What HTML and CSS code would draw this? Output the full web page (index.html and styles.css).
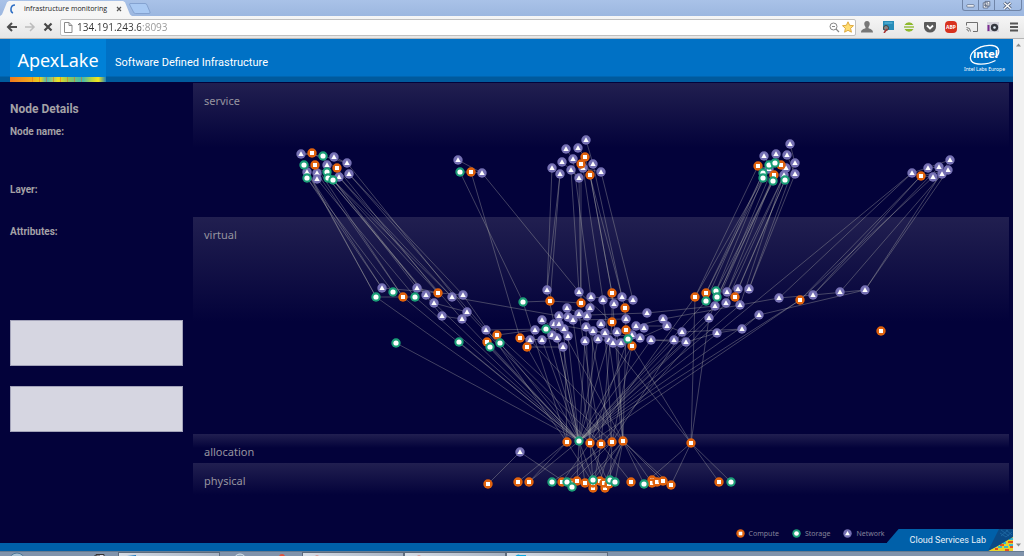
FILE: index.html
```html
<!DOCTYPE html>
<html lang="en">
	<head>
		<meta charset="utf-8" />
		<title>infrastructure monitoring</title>
		<link rel="stylesheet" href="styles.css">
	</head>
	<body>
		<div class="tabstrip">
			<div class="tab">
				<svg class="spinner" viewBox="0 0 10 10"><path d="M6 1C1 1 1 8 4 9" fill="none" stroke="#2f6fc4" stroke-width="1.5"/></svg>
				<span class="tab-title">infrastructure monitoring</span>
				<button class="tab-close" aria-label="Close tab"><svg viewBox="0 0 6 6"><path d="M1 1l4 4M5 1L1 5" stroke="#555" stroke-width="1.2"/></svg></button>
			</div>
			<button class="new-tab" aria-label="New tab"><svg viewBox="0 0 22 11"><path d="M1 .5h15q1.500 0 2 1.500l3 7q.5 1.500-1 1.500H6.500q-1.500 0-2-1.500L.8 2Q.3.5 1 .5z" fill="#a9c9f3" stroke="#7c9bc9" stroke-width=".8"/></svg></button>
			<div class="win-buttons">
				<button aria-label="Minimize"><svg viewBox="0 0 16 10"><rect x="4" y="5" width="8" height="2.500" rx="1" fill="#fff" stroke="#57657f" stroke-width=".8"/></svg></button>
				<button aria-label="Restore"><svg viewBox="0 0 16 10"><path d="M6.500 1.500h5v5h-5zM4.500 3h5v5.500h-5zM6.300 5h1.500v1.500H6.300z" fill="#fff" stroke="#57657f" stroke-width=".9"/></svg></button>
				<button class="win-close" aria-label="Close"><svg viewBox="0 0 24 10"><path d="M8.500 2.500l6 5.500M14.500 2.500l-6 5.500" stroke="#57657f" stroke-width="2.800"/><path d="M8.500 2.500l6 5.500M14.500 2.500l-6 5.500" stroke="#fff" stroke-width="1.200"/></svg></button>
			</div>
		</div>

		<div class="toolbar">
			<button aria-label="Back"><svg viewBox="0 0 12 12"><path d="M11 6H2M6 2L2 6l4 4" fill="none" stroke="#4d4d4d" stroke-width="2"/></svg></button>
			<button aria-label="Forward"><svg viewBox="0 0 12 12"><path d="M1 6h8.500M6 2l4 4-4 4" fill="none" stroke="#bdbdbd" stroke-width="1.500"/></svg></button>
			<button aria-label="Stop"><svg viewBox="0 0 12 12"><path d="M2.500 2.500l7 7M9.500 2.500l-7 7" stroke="#484848" stroke-width="2.200"/></svg></button>
			<div class="omnibox">
				<svg viewBox="0 0 12 12"><path d="M2.500 1.500h4.500l3 3v7H2.500zM7 1.500v3h3" fill="#fff" stroke="#8b8b8b"/></svg>
				<input class="url" type="text" aria-label="Address" value="134.191.243.6:8093">
				<svg viewBox="0 0 12 12"><circle cx="5.500" cy="5.500" r="3.500" fill="none" stroke="#888"/><path d="M8 8l3 3M4 5.500h3" stroke="#888" stroke-width="1.200"/></svg>
				<svg viewBox="0 0 12 12"><path d="M6 .8l1.600 3.500 3.900.4-2.900 2.600.8 3.900L6 9.300l-3.400 1.900.8-3.900L.5 4.700l3.900-.4z" fill="#ffdd72" stroke="#dba435" stroke-width=".9"/></svg>
			</div>
			<button aria-label="Profile"><svg viewBox="0 0 12 12"><path d="M6 0c2 0 3 1.400 2.700 3.200C8.500 4.700 8 5 7.500 6v1.300c1.500.8 4.500 1 4.500 4.200H0c0-3.200 3-3.400 4.500-4.200V6C4 5 3.500 4.700 3.300 3.200 3 1.400 4 0 6 0z" fill="#777"/></svg></button>
			<button aria-label="Inspector"><svg viewBox="0 0 12 12"><path d="M1 0h11v9H1z" fill="#278db9"/><path d="M2.500 2h8" stroke="#6ec0df"/><circle cx="4" cy="7" r="2.500" fill="#888" stroke="#444"/><path d="M2 12l3-4" stroke="#a33" stroke-width="1.500"/></svg></button>
			<button aria-label="Tunnel"><svg viewBox="0 0 12 12"><path d="M1.500 4a5 5 0 0 1 9 0zM1.500 8a5 5 0 0 0 9 0z" fill="#8fb92e"/><path d="M1 6h10" stroke="#98be45" stroke-width="1.500"/></svg></button>
			<button aria-label="Pocket"><svg viewBox="0 0 12 12"><path d="M1 1h10q1 0 1 1v4a6 5.500 0 0 1-12 0V2q0-1 1-1z" fill="#5a5a5a"/><path d="M3 4.500l3 3 3-3" fill="none" stroke="#fff" stroke-width="1.800"/></svg></button>
			<button class="abp" aria-label="Ad blocker">ABP</button>
			<button aria-label="Cast"><svg viewBox="0 0 12 12"><path d="M.5 4.500v-3h11v9H7M.5 6.500q4 0 4 4M.5 8.500q2 0 2 2" fill="none" stroke="#707070"/></svg></button>
			<button aria-label="Camera"><svg viewBox="0 0 12 12"><path d="M0 1h12v10H0z" fill="#d5d4dc"/><path d="M1.500 4v6" stroke="#7a2b91" stroke-width="2"/><circle cx="7.500" cy="6.500" r="3.700" fill="#353840"/><circle cx="7.500" cy="6.500" r="1.300" fill="#e3edf5"/></svg></button>
			<button aria-label="Menu"><svg viewBox="0 0 12 12"><path d="M2 2.500h8M2 6h8M2 9.500h8" stroke="#555" stroke-width="1.800"/></svg></button>
		</div>

		<div class="viewport">
			<div class="page">
				<header class="banner">
					<div class="brand"><span>ApexLake</span></div>
					<div class="subtitle">Software Defined Infrastructure</div>
					<div class="intel">
						<svg viewBox="0 0 32 21" role="img" aria-label="intel">
							<path d="M11 3.200C19 .2 29.500.3 29.800 7.200c.1 3-2 5-3.800 5.800M29 5C27-.5 14 .5 7 5.500-1 11-.5 19 9 20c6 .5 13-1 17.500-3.500" fill="none" stroke="#fff" stroke-width="1.300"/>
							<text x="4" y="14">intel</text>
						</svg>
						<span>Intel Labs Europe</span>
					</div>
				</header>

				<main class="content">
					<aside class="details">
						<h2>Node Details</h2>
						<h3 class="node-name">Node name:</h3>
						<h3 class="node-layer">Layer:</h3>
						<h3 class="node-attrs">Attributes:</h3>
						<textarea aria-label="Node attributes" readonly></textarea>
						<textarea aria-label="Node metrics" readonly></textarea>
					</aside>
					<section class="stage">
						<div class="layer">service</div>
						<div class="layer">virtual</div>
						<div class="layer">allocation</div>
						<div class="layer">physical</div>
						<svg id="graph" viewBox="193 83 816 446" preserveAspectRatio="xMinYMin meet"></svg>
					</section>
				</main>

				<footer class="footer">
					<ul class="legend">
						<li><svg viewBox="-5 -5 10 10"><circle r="4.700" fill="#e0620d"/><path d="M-2-2h4v4h-4z" fill="#fff"/></svg>Compute</li>
						<li><svg viewBox="-5 -5 10 10"><circle r="4.700" fill="#1b9e77"/><circle r="2.600" fill="#fff"/></svg>Storage</li>
						<li><svg viewBox="-5 -5 10 10"><circle r="4.700" fill="#7570b3"/><path d="M0-2.700L2.700 2h-5.400z" fill="#fff"/></svg>Network</li>
					</ul>
					<div class="lab">Cloud Services Lab
						<svg viewBox="0 0 25 22">
							<path d="M0 22L25 7v15z" fill="#e8d22b"/>
							<path d="M7 20h3M12 16h4M17 21h4M20 13h5M22 18h3" stroke="#e4521d" stroke-width="2"/>
							<path d="M10 18h4M16 18h4M21 10h4M21 16h4M15 14h3" stroke="#38b9c9" stroke-width="2"/>
							<path d="M0 22L11 0h14v8L8 18z" fill="#0a4a86"/>
							<path d="M13 1l8 6M18 1l6 5M12 4l6 4M20 1l-7 6M24 3l-6 5" stroke="#2470aa" stroke-width=".7"/>
						</svg>
					</div>
				</footer>
			</div>
			<div class="scrollbar">
				<svg viewBox="0 0 11 8"><path d="M3 5.500h5L5.500 2.500z" fill="#8b8b8b"/></svg>
				<svg viewBox="0 0 11 8"><path d="M3 2.500h5L5.500 5.500z" fill="#8b8b8b"/></svg>
			</div>
		</div>

		<div class="taskbar">
			<div class="pins">
				<svg viewBox="0 0 20 5"><circle cx="10" cy="9" r="8" fill="#a9c2d4" stroke="#4b7696"/></svg>
				<svg viewBox="0 0 20 5"><path d="M5 4h10v1H5z" fill="#c5ae8d"/></svg>
				<svg viewBox="0 0 20 5"><path d="M7 6V2.500h8V6M5 6V4h6" fill="#dde" stroke="#333"/></svg>
			</div>
			<div class="task"><svg viewBox="0 0 20 5"><path d="M5 5l3-2 9-1v3z" fill="#1677c0"/></svg></div>
			<div class="pins pins-mid">
				<svg viewBox="0 0 20 5"><circle cx="10" cy="8" r="6" fill="#93a8ba" stroke="#d8e5ee"/></svg>
				<svg viewBox="0 0 20 5"><circle cx="10" cy="5" r="3" fill="#e0523c"/></svg>
			</div>
			<div class="task"><svg viewBox="0 0 20 5"><path d="M9 5q5-5 10 0z" fill="#d55345"/></svg></div>
			<div class="task"><svg viewBox="0 0 20 5"><path d="M9 5q5-5 10 0z" fill="#d55345"/></svg></div>
			<div class="task"><svg viewBox="0 0 20 5"><path d="M7 5q3-5 6-3h6v3z" fill="#0aa6df"/></svg></div>
		</div>
		<script type="text/javascript" src="graph.js"></script>
	</body>
</html>
```
FILE: styles.css
```css
*{
	box-sizing: border-box;
}
body{
	margin: 0;
	min-height: 100vh;
	display: flex;
	flex-direction: column;
	font-family: "Noto Sans", "Open Sans", sans-serif;
	background: #03023a;
}
button{
	padding: 0;
	border: 0;
	background: none;
}
svg{
	display: block;
}

/* browser window */
.tabstrip{
	display: flex;
	align-items: flex-end;
	height: 16px;
	background: linear-gradient(#a9c2e8, #9cb7e0);
}
.tab{
	display: flex;
	align-items: center;
	width: 132px;
	height: 15px;
	padding: 0 10px 0 9px;
	background: #f6f6f6;
	clip-path: polygon(0 100%, 2px 90%, 7px 8%, 9px 0, 123px 0, 125px 8%, 130px 90%, 132px 100%);
}
.spinner{
	width: 10px;
	height: 10px;
	margin-right: 5px;
}
.tab-title{
	flex: 1;
	font: 7px/14px "Open Sans", sans-serif;
	color: #222;
	white-space: nowrap;
}
.tab-close{
	width: 6px;
}
.new-tab{
	width: 22px;
	height: 11px;
	margin: 0 0 2px -3px;
}
.win-buttons{
	display: flex;
	align-self: flex-start;
	height: 11px;
	margin-left: auto;
	margin-right: 2px;
	border: 1px solid #7085a8;
	border-top: 0;
	border-radius: 0 0 3px 3px;
}
.win-buttons button{
	width: 16px;
	border-right: 1px solid #7085a8;
}
.win-buttons .win-close{
	width: 26px;
	border-right: 0;
}
.toolbar{
	display: flex;
	align-items: center;
	gap: 9px;
	height: 23px;
	padding: 0 4px 0 6px;
	background: linear-gradient(#f6f6f6, #e6e6e6);
	border-bottom: 1px solid #b5b5b5;
}
.toolbar > button{
	flex: none;
	width: 12px;
	height: 12px;
}
.toolbar button:nth-child(-n+3){
	margin-right: -3px;
}
.omnibox{
	flex: 1;
	display: flex;
	align-items: center;
	gap: 2px;
	height: 17px;
	margin-right: -4px;
	padding: 0 1px;
	border: 1px solid #c0c0c0;
	border-radius: 2px;
	background: #fff;
}
.omnibox svg{
	width: 12px;
	height: 12px;
}
.url{
	flex: 1;
	min-width: 0;
	border: 0;
	padding: 0 0 0 1px;
	font: 10px/14px "Open Sans", sans-serif;
	/* host is dark, port is dimmed */
	color: transparent;
	background: linear-gradient(90deg, #333 65px, #959595 65px);
	-webkit-background-clip: text;
	background-clip: text;
}
.toolbar .abp{
	border-radius: 4px;
	background: #d8321f;
	color: #fff;
	font: bold 5px/12px "Open Sans", sans-serif;
}

/* page */
.viewport{
	flex: 1;
	display: flex;
}
.page{
	flex: 1;
	display: flex;
	flex-direction: column;
	min-width: 0;
}
.scrollbar{
	display: flex;
	flex-direction: column;
	justify-content: space-between;
	width: 11px;
	padding: 2px 0;
	background: #f1f1f1;
}
.scrollbar svg{
	width: 11px;
	height: 8px;
}
.banner{
	display: flex;
	height: 43px;
	padding: 0 8px 0 10px;
	color: #fff;
	background: linear-gradient(#0071c5 37px, #005a9d 38px);
}
.brand{
	width: 96px;
	padding-bottom: 5px;
	text-align: center;
	font-size: 18px;
	line-height: 42px;
	background:
		repeating-linear-gradient(90deg, transparent 0 3px, rgba(240,100,20,.5) 3px 4px, transparent 4px 7px) bottom / 60% 5px no-repeat,
		linear-gradient(90deg, #ef7a1e, #f3a51d 20%, #e8d120 32%, #45b8bd 38%, #f2e020 50%, #8fc75c 62%, #3db9b5 75%, #b9d53e 85%, #f5e61c 92%, #1c80bd) bottom / 100% 5px no-repeat,
		#0081d7;
}
.brand span{
	display: block;
	height: 38px;
}
.subtitle{
	padding-left: 9px;
	font: 11px/47px Roboto, sans-serif;
}
.intel{
	display: flex;
	flex-direction: column;
	align-items: center;
	margin-left: auto;
	padding-top: 5px;
	font-size: 5px;
	line-height: 9px;
}
.intel svg{
	width: 32px;
	height: 21px;
}
.intel text{
	font: bold 11px "Open Sans", sans-serif;
	fill: #fff;
}
.content{
	flex: 1;
	display: flex;
	padding: 1px 4px 0 0;
}
.details{
	width: 193px;
	padding: 18px 10px 0;
	color: #a3a1a6;
	font-family: Roboto, sans-serif;
}
.details h2{
	margin: 0;
	font-size: 12px;
	line-height: 16px;
}
.details h3{
	margin: 0;
	font-size: 10px;
	line-height: 14px;
}
.details .node-name{
	margin-top: 8px;
}
.details .node-layer{
	margin-top: 44px;
}
.details .node-attrs{
	margin-top: 28px;
}
.details textarea{
	display: block;
	width: 100%;
	height: 46px;
	margin-bottom: 20px;
	border: 1px solid #a3a3b9;
	background: #d6d6e1;
	resize: none;
}
.node-attrs + textarea{
	margin-top: 81px;
}
.stage{
	flex: 1;
	position: relative;
	display: grid;
	grid-template-rows: 134fr 217fr 29fr 66fr;
	min-width: 0;
}
.layer{
	padding: 10px 11px 0;
	font-size: 11px;
	line-height: 16px;
	color: #96949f;
	background: linear-gradient(#211f50, #03023a 48%);
}
#graph{
	position: absolute;
	inset: 0;
	width: 100%;
	height: 100%;
}
.footer{
	display: flex;
	justify-content: flex-end;
	height: 22px;
	background: linear-gradient(transparent 14px, #0060a9 14px);
}
.legend{
	display: flex;
	gap: 13px;
	height: 9px;
	margin: 0 2px 0 0;
	padding: 0;
	list-style: none;
	font-size: 7px;
	line-height: 9px;
	color: #85839a;
}
.legend li{
	display: flex;
	gap: 4px;
}
.legend svg{
	width: 9px;
	height: 9px;
}
.lab{
	display: flex;
	padding-left: 23px;
	color: #e8f1f8;
	font: 9px/22px Roboto, sans-serif;
	background: #0060a9;
	clip-path: polygon(0 14px, 12px 0, 100% 0, 100% 100%, 0 100%);
}
.lab svg{
	width: 25px;
	height: 22px;
	margin-left: 2px;
}

/* desktop taskbar */
.taskbar{
	display: flex;
	height: 5px;
	background: #8093ab;
	border-top: 1px solid #667b91;
	overflow: hidden;
}
.pins{
	display: flex;
	justify-content: space-between;
	width: 118px;
	padding: 0 9px 0 7px;
}
.pins-mid{
	width: 82px;
	padding: 0 10px;
}
.taskbar svg{
	width: 20px;
	height: 5px;
}
.task{
	width: 102px;
	border: 1px solid #5d6b7c;
	border-bottom: 0;
	background: linear-gradient(90deg, #d5dce5, #a4b1c2);
}
```
FILE: graph.js
```js
var NS = "http://www.w3.org/2000/svg";
var graph = document.getElementById("graph");

// c = compute, s = storage, n = network
var nodes = {
	n: "301,154 334,157 347,163 327,165 307,172 317,173 349,174 317,179 339,177 458,160 482,173 " +
		"586,140 578,148 566,149 573,159 562,162 593,164 552,168 583,168 571,170 560,174 601,172 579,178 " +
		"790,144 776,154 764,156 787,155 795,163 786,168 769,169 784,175 795,174 " +
		"912,173 933,177 928,168 939,167 950,160 948,170 942,174 " +
		"382,288 417,288 426,295 434,303 452,297 463,295 442,316 467,312 462,319 486,330 " +
		"547,290 579,292 591,297 603,300 622,297 614,304 633,300 567,308 590,308 559,316 542,320 568,317 573,320 " +
		"579,314 587,316 647,313 626,319 601,324 554,324 559,324 535,330 564,329 586,327 593,331 605,333 617,332 " +
		"636,326 644,328 632,335 640,338 530,340 542,340 552,335 557,338 568,336 563,347 585,341 598,339 609,340 613,343 621,343 " +
		"727,292 738,289 749,289 715,306 726,303 740,305 709,318 663,319 667,326 651,340 682,332 674,340 686,342 " +
		"717,333 742,329 759,315 779,298 813,295 840,292 865,290 520,452",
	c: "312,153 315,165 337,168 471,172 585,157 581,164 590,175 758,166 781,165 774,175 921,176 " +
		"403,297 438,293 497,335 487,342 550,301 581,303 612,293 625,308 612,322 626,330 520,338 527,347 632,346 " +
		"695,297 706,293 735,297 800,300 881,331 567,442 590,443 601,444 612,442 623,441 691,443 " +
		"488,484 518,482 529,482 562,482 571,483 577,481 585,483 593,488 593,483 600,481 605,488 604,483 609,484 " +
		"631,482 652,480 652,483 657,482 663,481 671,485 719,482",
	s: "323,156 304,165 327,172 307,178 328,178 333,180 460,172 769,165 775,163 763,173 763,178 773,181 785,180 " +
		"393,292 376,297 415,297 500,343 490,347 396,343 459,342 523,302 546,329 628,339 716,291 717,297 706,301 " +
		"579,441 552,482 567,482 572,487 593,480 610,480 615,482 644,484 731,482"
};

// every start point is joined to each of the ends behind it
var links = [
	// service clusters
	"301,154 312,153 323,156", "312,153 337,168", "323,156 347,163", "334,157 347,163", "304,165 327,172", "458,160 482,173", "460,172 471,172", "471,172 482,173",
	"586,140 593,164", "578,148 585,157", "566,149 573,159", "562,162 571,170", "552,168 560,174", "583,168 601,172", "571,170 579,178",
	"790,144 795,163", "776,154 781,165", "764,156 769,165", "787,155 795,174", "758,166 769,169",
	"912,173 950,160 921,176", "921,176 933,177 948,170", "928,168 939,167",
	// service to virtual
	"304,165 376,297", "307,172 376,297 382,288", "307,178 382,288 393,292", "317,173 403,297", "315,165 403,297", "317,179 415,297",
	"327,172 417,288 442,316", "328,178 426,295 434,303", "333,180 438,293 452,297", "339,177 452,297 462,319", "337,168 438,293", "349,174 463,295 486,330", "347,163 467,312",
	"460,172 523,302", "471,172 520,338", "482,173 579,292",
	"552,168 547,290", "560,174 550,301 547,290", "571,170 579,292", "573,159 591,297", "579,178 581,303", "581,164 581,303", "583,168 603,300", "590,175 612,293", "590,175 614,304", "593,164 622,297", "601,172 633,300", "585,157 625,308",
	"758,166 695,297", "763,173 706,293 706,301", "763,178 695,297 716,291", "769,169 706,293", "773,181 716,291 717,297", "774,175 727,292 715,306", "784,175 727,292 726,303", "785,180 738,289 735,297", "786,168 740,305", "795,163 749,289", "795,174 749,289", "775,163 709,318",
	"912,173 779,298 709,340", "921,176 800,300", "928,168 813,295", "933,177 800,300", "939,167 813,295", "942,174 840,292", "948,170 865,290", "950,160 865,290",
	// inside the virtual layer
	"376,297 403,297", "382,288 463,295", "403,297 415,297", "417,288 438,293", "434,303 467,312", "452,297 559,316", "442,316 462,319", "486,330 546,329", "497,335 535,330", "520,338 542,340", "527,347 563,347",
	"523,302 550,301", "550,301 581,303", "542,320 568,336", "559,316 647,313", "579,292 612,322", "591,297 633,300", "567,308 587,316", "573,320 626,319", "535,330 564,329", "530,340 557,338", "554,324 605,333", "593,331 640,338", "598,339 621,343", "626,330 644,328", "612,293 612,322", "625,308 626,330",
	"636,326 663,319 667,326", "640,338 667,326", "651,340 686,342 674,340", "647,313 715,306", "663,319 740,305", "667,326 682,332", "682,332 742,329", "686,342 717,333", "717,333 742,329", "742,329 759,315", "759,315 865,290", "740,305 779,298", "779,298 813,295", "813,295 865,290",
	// virtual to allocation
	"579,441 376,297 403,297 415,297 434,303 462,319 396,343 459,342 490,347 487,342 500,343 527,347 542,340 557,338 563,347 568,336 585,341 598,339 609,340 632,346 651,340 674,340 686,342 709,318 715,306 740,305 706,301 709,340 800,300 759,315 547,290 546,329",
	"567,442 463,295 523,302 564,329", "590,443 467,312 573,320 586,327 593,331 628,339 695,297 800,300", "601,444 486,330 579,314 612,322 726,303", "612,442 497,335 587,316 605,333 632,346 682,332", "623,441 530,340 559,324 603,300 617,332 626,330 612,293",
	"691,443 695,297 709,318 632,346 609,340",
	// allocation to physical
	"520,452 488,484 572,487", "567,442 518,482 529,482 593,483", "579,441 529,482 577,481 593,480 585,483", "590,443 562,482 593,483 604,483 609,484", "601,444 567,482 593,488 631,482", "612,442 552,482 571,483 610,480 600,481", "623,441 593,480 605,488 604,483 585,483 644,484 652,483 663,481 671,485 615,482", "691,443 644,484 671,485 719,482 731,482"
];

function add(tag, attrs, parent) {
	var el = document.createElementNS(NS, tag);
	for (var key in attrs) {
		el.setAttribute(key, attrs[key]);
	}
	parent.appendChild(el);
	return el;
}

var path = "";
links.forEach(function (group) {
	var ends = group.split(" ");
	var start = ends.shift();
	ends.forEach(function (end) {
		path += "M" + start + "L" + end;
	});
});
// one path per line keeps the overlaps brighter
path.split("M").slice(1).forEach(function (d) {
	add("path", { d: "M" + d, stroke: "#b4b2ae", "stroke-opacity": 0.4, "stroke-width": 0.9 }, graph);
});

["n", "c", "s"].forEach(function (type) {
	nodes[type].split(" ").forEach(function (pos) {
		var g = add("g", { transform: "translate(" + pos + ")" }, graph);
		if (type === "n") {
			add("circle", { r: 4.7, fill: "#7570b3" }, g);
			add("path", { d: "M0-2.700L2.700 2h-5.400z", fill: "#fff" }, g);
		} else if (type === "c") {
			add("circle", { r: 4.7, fill: "#e0620d" }, g);
			add("path", { d: "M-2-2h4v4h-4z", fill: "#fff" }, g);
		} else {
			add("circle", { r: 4.7, fill: "#1b9e77" }, g);
			add("circle", { r: 2.6, fill: "#fff" }, g);
		}
	});
});
```
